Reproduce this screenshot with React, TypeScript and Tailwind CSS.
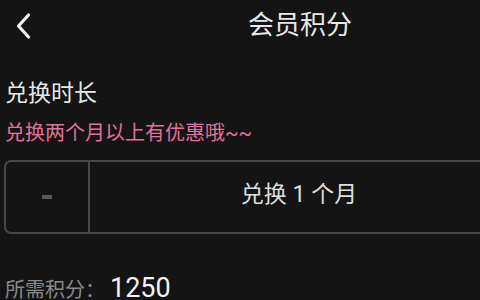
import React from 'react';

export default function App() {
  return (
    <div className="w-[480px] h-[300px] overflow-hidden bg-[#141414]">
      <div
        className="w-[600px] h-[300px] text-[#e8e8e8]"
        style={{ fontFamily: 'Roboto, "Noto Sans CJK SC", sans-serif' }}
      >
        {/* Header */}
        <div className="relative h-[50px] flex items-center justify-center">
          <button className="absolute left-[12px] top-[11px] w-[22px] h-[30px] flex items-center justify-center">
            <svg width="18" height="28" viewBox="0 0 18 28" fill="none">
              <path d="M14.5 3 L4.5 14 L14.5 25" stroke="#f2f2f2" strokeWidth="3.2" strokeLinecap="round" strokeLinejoin="round" />
            </svg>
          </button>
          <h1 className="text-[26px] leading-none font-normal">会员积分</h1>
        </div>

        {/* Duration */}
        <div className="px-[5px]">
          <div className="mt-[32px] text-[23px] leading-none">兑换时长</div>
          <div className="mt-[18px] text-[20px] leading-[21px] text-[#e0719b]">兑换两个月以上有优惠哦~~</div>
        </div>

        {/* Selector */}
        <div className="mx-[4px] mt-[16px] h-[74px] flex border-2 border-[#484848] rounded-[7px]">
          <div className="w-[84px] flex items-center justify-center border-r-2 border-[#484848]">
            <div className="w-[10px] h-[4px] bg-[#595959]" />
          </div>
          <div className="flex-1 flex items-center justify-center pr-[86px] pb-[6px] text-[23px] leading-none text-[#dedede]">
            兑换 1 个月
          </div>
        </div>

        {/* Required points */}
        <div className="px-[5px] mt-[41px] flex items-baseline leading-none">
          <span className="text-[20px] text-[#8a8a8a]">所需积分：</span>
          <span className="ml-[5px] text-[27px] text-[#f2f2f2]">1250</span>
        </div>
      </div>
    </div>
  );
}
